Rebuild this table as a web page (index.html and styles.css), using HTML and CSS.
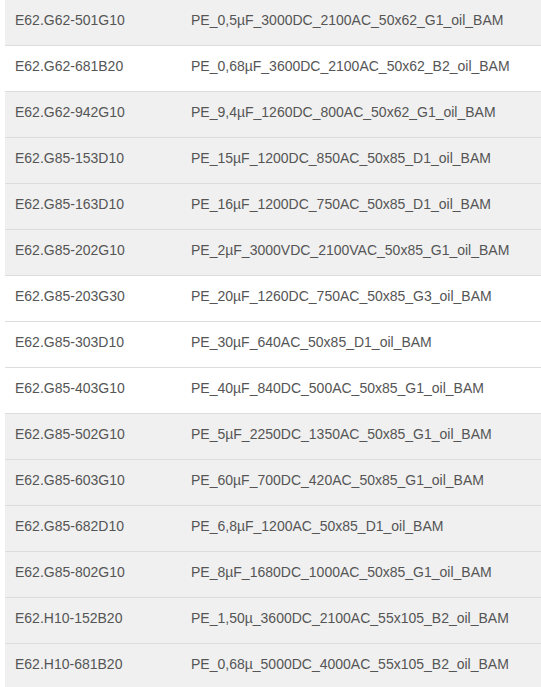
FILE: index.html
```html
<!DOCTYPE html>
<html lang="en">
<head>
  <meta charset="UTF-8" />
  <meta name="viewport" content="width=device-width, initial-scale=1.0"/>
  <title>Kondensatoren</title>
  <link rel="stylesheet" href="styles.css">
</head>
<body>

<table class="parts">
  <tbody>
    <tr class="shade"><td>E62.G62-501G10</td><td>PE_0,5µF_3000DC_2100AC_50x62_G1_oil_BAM</td></tr>
    <tr><td>E62.G62-681B20</td><td>PE_0,68µF_3600DC_2100AC_50x62_B2_oil_BAM</td></tr>
    <tr class="shade"><td>E62.G62-942G10</td><td>PE_9,4µF_1260DC_800AC_50x62_G1_oil_BAM</td></tr>
    <tr class="shade"><td>E62.G85-153D10</td><td>PE_15µF_1200DC_850AC_50x85_D1_oil_BAM</td></tr>
    <tr class="shade"><td>E62.G85-163D10</td><td>PE_16µF_1200DC_750AC_50x85_D1_oil_BAM</td></tr>
    <tr class="shade"><td>E62.G85-202G10</td><td>PE_2µF_3000VDC_2100VAC_50x85_G1_oil_BAM</td></tr>
    <tr><td>E62.G85-203G30</td><td>PE_20µF_1260DC_750AC_50x85_G3_oil_BAM</td></tr>
    <tr><td>E62.G85-303D10</td><td>PE_30µF_640AC_50x85_D1_oil_BAM</td></tr>
    <tr><td>E62.G85-403G10</td><td>PE_40µF_840DC_500AC_50x85_G1_oil_BAM</td></tr>
    <tr class="shade"><td>E62.G85-502G10</td><td>PE_5µF_2250DC_1350AC_50x85_G1_oil_BAM</td></tr>
    <tr class="shade"><td>E62.G85-603G10</td><td>PE_60µF_700DC_420AC_50x85_G1_oil_BAM</td></tr>
    <tr class="shade"><td>E62.G85-682D10</td><td>PE_6,8µF_1200AC_50x85_D1_oil_BAM</td></tr>
    <tr class="shade"><td>E62.G85-802G10</td><td>PE_8µF_1680DC_1000AC_50x85_G1_oil_BAM</td></tr>
    <tr class="shade"><td>E62.H10-152B20</td><td>PE_1,50µ_3600DC_2100AC_55x105_B2_oil_BAM</td></tr>
    <tr class="shade"><td>E62.H10-681B20</td><td>PE_0,68µ_5000DC_4000AC_55x105_B2_oil_BAM</td></tr>
  </tbody>
</table>

</body>
</html>
```

FILE: styles.css
```css
* {
  box-sizing: border-box;
}

body {
  margin: 0 0 0 5px;
  background: #fff;
  font-family: "Liberation Sans", Arial, sans-serif;
  font-size: 14px;
  color: #555;
}

.parts {
  width: 100%;
  border-collapse: collapse;
}

.parts td {
  padding: 10px 10px 15px;
  line-height: 20px;
  text-align: left;
  vertical-align: top;
  border-bottom: 1px solid #ddd;
  white-space: nowrap;
}

.parts td:first-child {
  width: 176px;
}

.parts tr.shade {
  background: #f0f0f0;
}

.parts tr:last-child td {
  border-bottom: none;
}
```
